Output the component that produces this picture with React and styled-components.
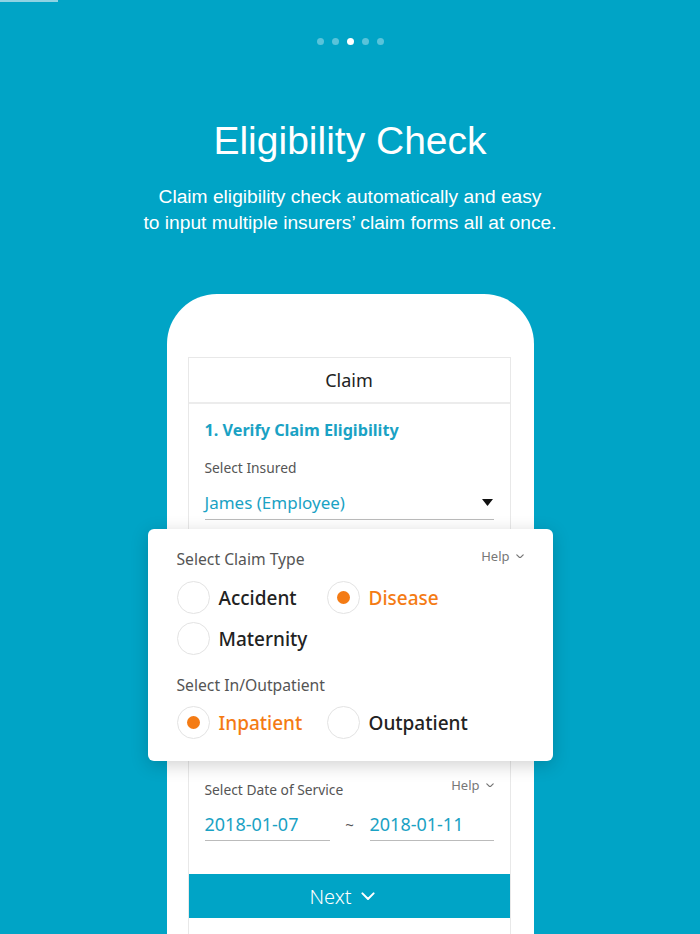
import React from 'react'
import styled, { createGlobalStyle } from 'styled-components'

const Global = createGlobalStyle`
  html, body {
    margin: 0;
    padding: 0;
    background: #00a4c6;
  }
  body {
    height: 934px;
    overflow: hidden;
  }
`

const Page = styled.div`
  display: flex;
  flex-direction: column;
  align-items: center;
  min-height: 934px;
  background: #00a4c6;
  font-family: "Liberation Sans", Arial, sans-serif;
  color: #fff;
`

const TopLine = styled.div`
  align-self: flex-start;
  width: 58px;
  height: 2px;
  background: #8fd3e3;
`

const Dots = styled.div`
  display: flex;
  gap: 8px;
  margin-top: 36px;
`

const Dot = styled.span`
  width: 7px;
  height: 7px;
  border-radius: 50%;
  background: ${p => (p.active ? '#fff' : 'rgba(255,255,255,0.35)')};
`

const Title = styled.h1`
  margin: 73px 0 0;
  font-size: 39px;
  line-height: 46px;
  font-weight: 400;
`

const Subtitle = styled.p`
  margin: 20px 0 0;
  font-size: 19.2px;
  line-height: 26px;
  text-align: center;
`

const Phone = styled.div`
  margin-top: 58px;
  width: 367px;
  box-sizing: border-box;
  padding: 63px 23px 0 21px;
  background: #fff;
  border-radius: 50px 50px 0 0;
  flex: 1;
  font-family: "Noto Sans", "Open Sans", sans-serif;
`

const Card = styled.div`
  border: 1px solid #e8e8e8;
  border-bottom: none;
  color: #222;
`

const CardHeader = styled.div`
  height: 46px;
  display: flex;
  align-items: center;
  justify-content: center;
  font-size: 18px;
  border-bottom: 2px solid #ececec;
  padding-bottom: 1px;
  box-sizing: border-box;
`

const Section = styled.div`
  padding: ${p => p.pad || '0'};
`

const Heading = styled.div`
  color: #1aa2c4;
  font-weight: 700;
  font-size: 16.2px;
  line-height: 24px;
`

const LabelRow = styled.div`
  display: flex;
  justify-content: space-between;
  align-items: flex-start;
  margin-top: ${p => p.mt || 0}px;
`

const Label = styled.div`
  color: #555;
  font-size: ${p => p.size || 13.8}px;
  line-height: ${p => (p.size ? 20 : 18)}px;
`

const Help = styled.div`
  display: flex;
  align-items: center;
  gap: 6px;
  color: #777;
  font-size: 13px;
  line-height: 14px;
  margin-top: ${p => p.mt || 0}px;
`

const Select = styled.div`
  margin-top: 9px;
  height: 33px;
  display: flex;
  align-items: center;
  justify-content: space-between;
  border-bottom: 1px solid #bbb;
  color: #1aa2c4;
  font-size: 17px;
`

const Popup = styled.div`
  margin: 0 -43px 0 -41px;
  padding: 20px 29px 22px 29px;
  background: #fff;
  border-radius: 6px;
  box-shadow: 0 4px 18px rgba(0, 0, 0, 0.18);
  position: relative;
`

const RadioGrid = styled.div`
  display: grid;
  grid-template-columns: 150px 150px;
  row-gap: 8px;
  margin-top: ${p => p.mt}px;
`

const RadioItem = styled.div`
  display: flex;
  align-items: center;
  gap: 9px;
  font-size: 19px;
  font-weight: 500;
  color: ${p => (p.checked ? '#f47b14' : '#222')};
`

const Circle = styled.span`
  width: 31px;
  height: 31px;
  border-radius: 50%;
  border: 1px solid #e3e3e3;
  display: flex;
  align-items: center;
  justify-content: center;
  &::after {
    content: '';
    display: ${p => (p.checked ? 'block' : 'none')};
    width: 13px;
    height: 13px;
    border-radius: 50%;
    background: #f47b14;
  }
`

const DateRow = styled.div`
  margin-top: 12px;
  display: flex;
  align-items: flex-start;
`

const DateInput = styled.div`
  width: ${p => p.w}px;
  height: 29px;
  line-height: 26px;
  border-bottom: 1px solid #bbb;
  color: #1aa2c4;
  font-size: 18px;
`

const Tilde = styled.div`
  width: 40px;
  text-align: center;
  color: #555;
  font-size: 15px;
  line-height: 26px;
`

const NextButton = styled.div`
  height: 44px;
  background: #00a4c6;
  color: #fff;
  display: flex;
  align-items: center;
  justify-content: center;
  gap: 9px;
  padding-right: 14px;
  font-size: 20px;
  font-weight: 300;
`

const Filler = styled.div`
  height: 40px;
`

const Chevron = ({ size = 8, color = '#777', width = 1.5 }) => (
  <svg width={size} height={size * 0.6} viewBox="0 0 10 6">
    <path d="M1 1 L5 5 L9 1" fill="none" stroke={color} strokeWidth={width} strokeLinecap="round" strokeLinejoin="round" />
  </svg>
)

const Radio = ({ label, checked }) => (
  <RadioItem checked={checked}>
    <Circle checked={checked} />
    {label}
  </RadioItem>
)

export default function App() {
  return (
    <Page>
      <Global />
      <TopLine />
      <Dots>
        {[0, 1, 2, 3, 4].map(i => <Dot key={i} active={i === 2} />)}
      </Dots>
      <Title>Eligibility Check</Title>
      <Subtitle>
        Claim eligibility check automatically and easy
        <br />
        to input multiple insurers’ claim forms all at once.
      </Subtitle>
      <Phone>
        <Card>
          <CardHeader>Claim</CardHeader>
          <Section pad="14px 16px 9px 16px">
            <Heading>1. Verify Claim Eligibility</Heading>
            <LabelRow mt={17}>
              <Label>Select Insured</Label>
            </LabelRow>
            <Select>
              James (Employee)
              <svg width="11" height="7" viewBox="0 0 11 7" style={{ marginRight: 1 }}>
                <path d="M0 0 H11 L5.5 7 Z" fill="#111" />
              </svg>
            </Select>
          </Section>
          <Popup>
            <LabelRow>
              <Label size={15.7}>Select Claim Type</Label>
              <Help>Help <Chevron /></Help>
            </LabelRow>
            <RadioGrid mt={12}>
              <Radio label="Accident" />
              <Radio label="Disease" checked />
              <Radio label="Maternity" />
            </RadioGrid>
            <LabelRow mt={20}>
              <Label size={15.7}>Select In/Outpatient</Label>
            </LabelRow>
            <RadioGrid mt={11}>
              <Radio label="Inpatient" checked />
              <Radio label="Outpatient" />
            </RadioGrid>
          </Popup>
          <Section pad="20px 16px 33px 16px">
            <LabelRow>
              <Label>Select Date of Service</Label>
              <Help mt={-3}>Help <Chevron /></Help>
            </LabelRow>
            <DateRow>
              <DateInput w={125}>2018-01-07</DateInput>
              <Tilde>~</Tilde>
              <DateInput w={124}>2018-01-11</DateInput>
            </DateRow>
          </Section>
          <NextButton>
            Next <Chevron size={14} color="#fff" width={1.4} />
          </NextButton>
          <Filler />
        </Card>
      </Phone>
    </Page>
  )
}
